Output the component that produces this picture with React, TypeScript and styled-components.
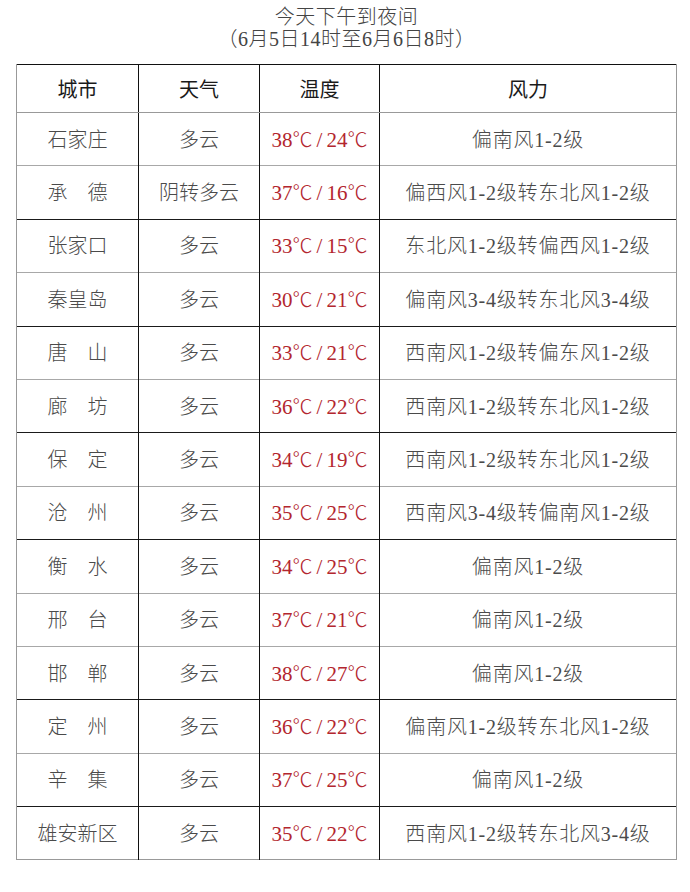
import React from "react";
import styled, { createGlobalStyle } from "styled-components";

type Row = {
  city: string;
  weather: string;
  high: number;
  low: number;
  wind: string;
  dark?: boolean;
};

const rows: Row[] = [
  { city: "石家庄", weather: "多云", high: 38, low: 24, wind: "偏南风1-2级" },
  { city: "承　德", weather: "阴转多云", high: 37, low: 16, wind: "偏西风1-2级转东北风1-2级" },
  { city: "张家口", weather: "多云", high: 33, low: 15, wind: "东北风1-2级转偏西风1-2级", dark: true },
  { city: "秦皇岛", weather: "多云", high: 30, low: 21, wind: "偏南风3-4级转东北风3-4级" },
  { city: "唐　山", weather: "多云", high: 33, low: 21, wind: "西南风1-2级转偏东风1-2级", dark: true },
  { city: "廊　坊", weather: "多云", high: 36, low: 22, wind: "西南风1-2级转东北风1-2级" },
  { city: "保　定", weather: "多云", high: 34, low: 19, wind: "西南风1-2级转东北风1-2级", dark: true },
  { city: "沧　州", weather: "多云", high: 35, low: 25, wind: "西南风3-4级转偏南风1-2级" },
  { city: "衡　水", weather: "多云", high: 34, low: 25, wind: "偏南风1-2级", dark: true },
  { city: "邢　台", weather: "多云", high: 37, low: 21, wind: "偏南风1-2级" },
  { city: "邯　郸", weather: "多云", high: 38, low: 27, wind: "偏南风1-2级" },
  { city: "定　州", weather: "多云", high: 36, low: 22, wind: "偏南风1-2级转东北风1-2级", dark: true },
  { city: "辛　集", weather: "多云", high: 37, low: 25, wind: "偏南风1-2级" },
  { city: "雄安新区", weather: "多云", high: 35, low: 22, wind: "西南风1-2级转东北风3-4级", dark: true },
];

export default function App() {
  return (
    <>
      <GlobalStyle />
      <Page>
        <Title>
          <div>今天下午到夜间</div>
          <div>（6月5日14时至6月6日8时）</div>
        </Title>
        <Table>
          <colgroup>
            <col style={{ width: 122 }} />
            <col style={{ width: 121 }} />
            <col style={{ width: 120 }} />
            <col />
          </colgroup>
          <thead>
            <tr>
              <HeadCell>城市</HeadCell>
              <HeadCell>天气</HeadCell>
              <HeadCell>温度</HeadCell>
              <HeadCell>风力</HeadCell>
            </tr>
          </thead>
          <tbody>
            {rows.map((r) => (
              <BodyRow key={r.city} $dark={r.dark}>
                <Cell>{r.city}</Cell>
                <Cell>{r.weather}</Cell>
                <TempCell>
                  {r.high}
                  <Deg>℃</Deg>
                  <Slash>/</Slash>
                  {r.low}
                  <Deg>℃</Deg>
                </TempCell>
                <WindCell>{r.wind}</WindCell>
              </BodyRow>
            ))}
          </tbody>
        </Table>
      </Page>
    </>
  );
}

const GlobalStyle = createGlobalStyle`
  body {
    margin: 0;
    background: #fff;
    font-family: "Liberation Serif", "Noto Sans CJK SC", serif;
  }
`;

const Page = styled.div`
  width: 690px;
  height: 892px;
  padding: 6px 0 0 16px;
  box-sizing: border-box;
  background: #fff;
`;

const Title = styled.div`
  width: 661px;
  text-align: center;
  color: #444;
  font-size: 20px;
  line-height: 22px;
  font-weight: 300;
  letter-spacing: 0.5px;
  margin-bottom: 14px;
`;

const Table = styled.table`
  width: 661px;
  border-collapse: collapse;
  table-layout: fixed;
  border-top: 1px solid #111;
  border-bottom: 1px solid #999;
  td:first-child,
  th:first-child {
    border-left: 1px solid #999;
  }
  td:last-child,
  th:last-child {
    border-right: 1px solid #999;
  }
`;

const HeadCell = styled.th`
  height: 47px;
  padding: 0;
  font-size: 20px;
  font-weight: 400;
  color: #1a1a1a;
  text-align: center;
  border-left: 1.5px solid #111;
  border-bottom: 1px solid #999;
`;

const BodyRow = styled.tr<{ $dark?: boolean }>`
  height: 53.4px;
  td {
    border-top: 1px solid ${(p) => (p.$dark ? "#1a1a1a" : "#a8a8a8")};
  }
`;

const Cell = styled.td`
  padding: 0 0 2px;
  font-size: 20px;
  font-weight: 300;
  text-align: center;
  white-space: nowrap;
  color: #4a4a4a;
  border-left: 1.5px solid #111;
`;

const WindCell = styled(Cell)`
  letter-spacing: 0.8px;
`;

const TempCell = styled(Cell)`
  font-size: 21px;
  color: #b3262e;
`;

const Deg = styled.span`
  font-family: "Noto Sans CJK SC", sans-serif;
  font-size: 20px;
  font-weight: 300;
`;

const Slash = styled.span`
  margin: 0 4px;
`;
